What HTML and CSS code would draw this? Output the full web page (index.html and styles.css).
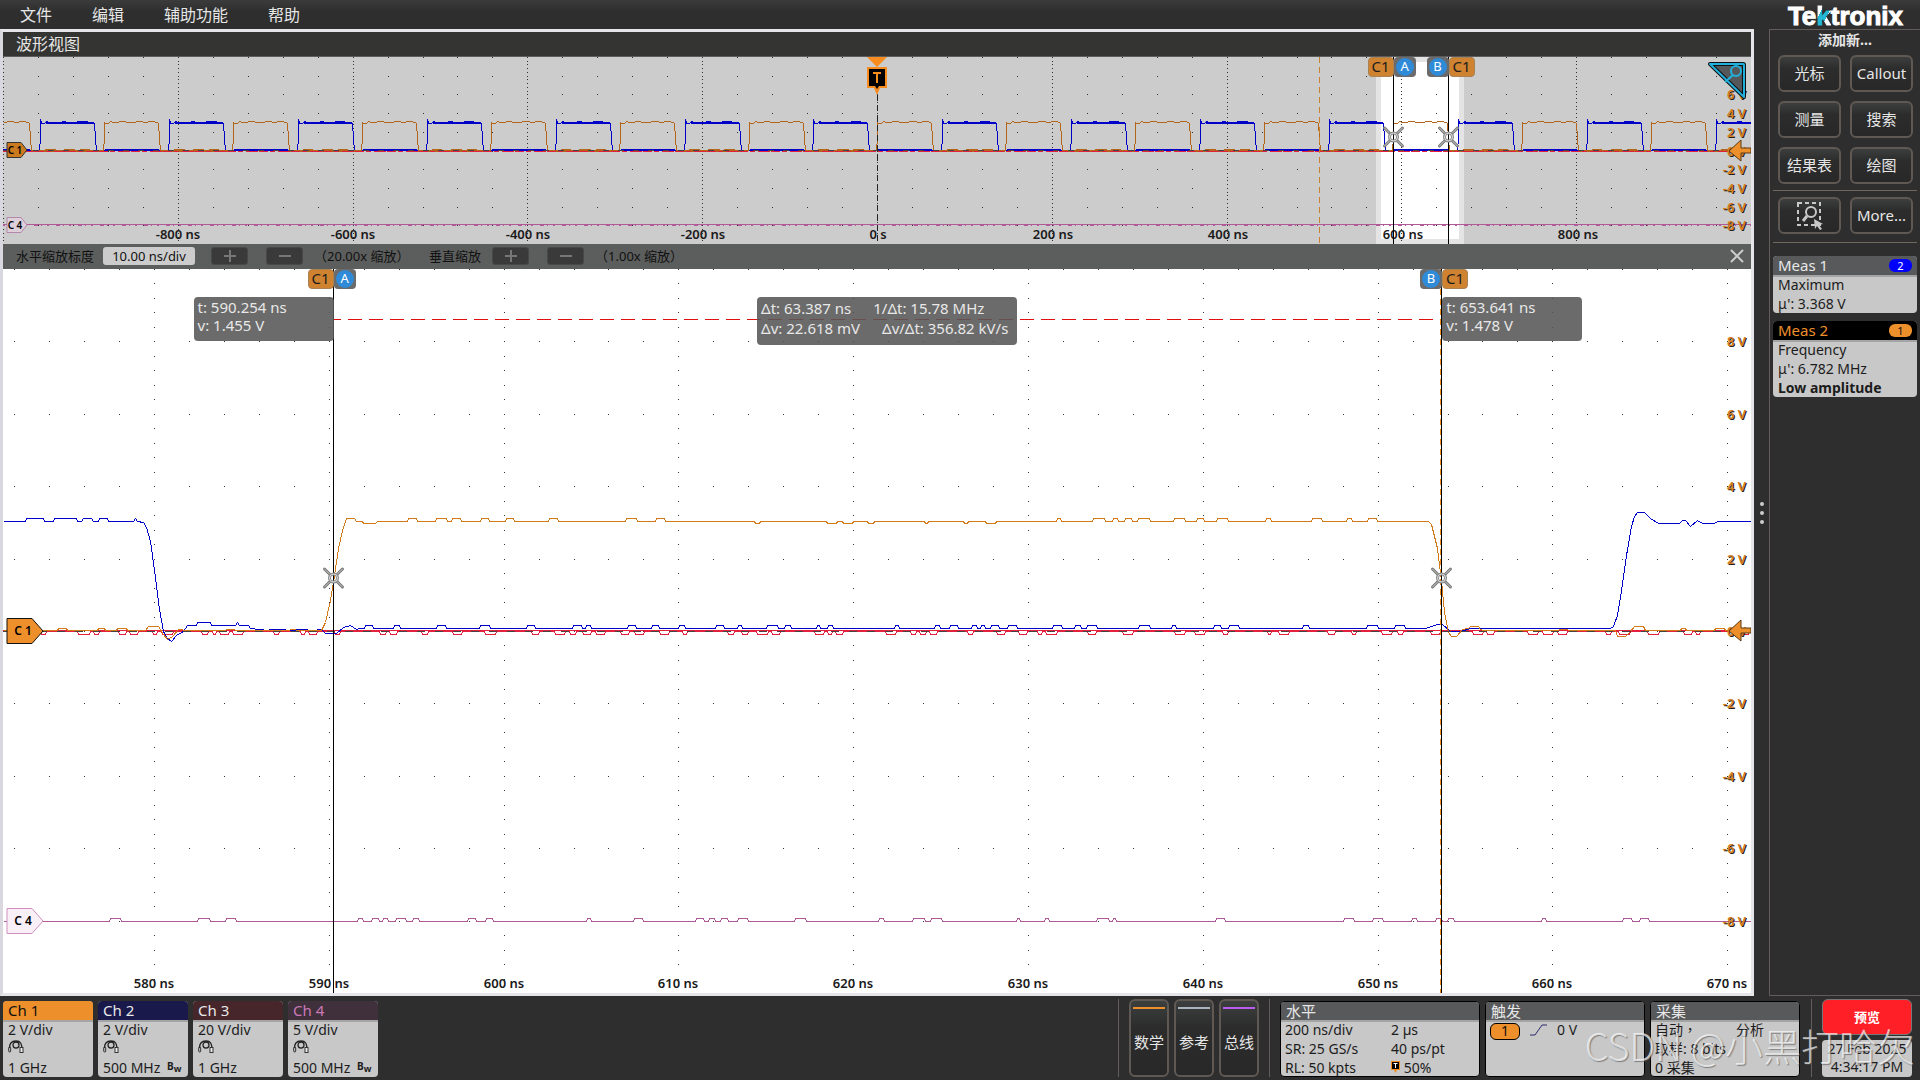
FILE: index.html
```html
<!DOCTYPE html>
<html lang="zh-CN">
<head>
<meta charset="utf-8">
<meta name="viewport" content="width=device-width, initial-scale=1">
<title>Tektronix</title>
<link rel="stylesheet" href="styles.css">
</head>
<body>
<svg class="defs" aria-hidden="true">
  <defs>
    <symbol id="probe" viewBox="0 0 16 13">
      <path d="M1.500 8C1.500 4 3 1 8 1s5.500 3 6 7" fill="none" stroke="#222" stroke-width="1.300"/>
      <circle cx="8" cy="5" r="3" fill="none" stroke="#222" stroke-width="1.300"/>
      <rect x=".7" y="7" width="2" height="5" rx="1" fill="none" stroke="#333"/>
      <rect x="12" y="7.500" width="3" height="5" fill="#eee" stroke="#333"/>
    </symbol>
  </defs>
</svg>

<header class="menubar">
  <nav class="menu">
    <button type="button">文件</button>
    <button type="button">编辑</button>
    <button type="button">辅助功能</button>
    <button type="button">帮助</button>
  </nav>
  <div class="logo">Te<span class="logo-k">k</span>tronix</div>
</header>

<main class="workspace">
  <section class="view">
    <h1 class="view-title">波形视图</h1>
    <div class="plot overview"><svg id="overview"></svg>
      <span class="tag-pair at-a narrow"><b class="src">C1</b><b class="cur"><i>A</i></b></span>
      <span class="tag-pair at-b narrow"><b class="cur"><i>B</i></b><b class="src">C1</b></span>
    </div>
    <div class="zoombar">
      <label for="hscale">水平缩放标度</label>
      <input id="hscale" type="text" value="10.00 ns/div">
      <button type="button" class="step" aria-label="水平放大"><svg viewBox="0 0 14 14"><path d="M7 1v12M1 7h12"/></svg></button>
      <button type="button" class="step" aria-label="水平缩小"><svg viewBox="0 0 14 14"><path d="M1 7h12"/></svg></button>
      <span class="factor">（20.00x 缩放）</span>
      <span class="vlabel">垂直缩放</span>
      <button type="button" class="step" aria-label="垂直放大"><svg viewBox="0 0 14 14"><path d="M7 1v12M1 7h12"/></svg></button>
      <button type="button" class="step" aria-label="垂直缩小"><svg viewBox="0 0 14 14"><path d="M1 7h12"/></svg></button>
      <span class="factor">（1.00x 缩放）</span>
      <button type="button" class="close" aria-label="关闭"><svg viewBox="0 0 14 14"><path d="M1 1l12 12M13 1L1 13"/></svg></button>
    </div>
    <div class="plot zoomed"><svg id="zoomed"></svg>
      <span class="tag-pair at-a"><b class="src">C1</b><b class="cur"><i>A</i></b></span>
      <span class="tag-pair at-b"><b class="cur"><i>B</i></b><b class="src">C1</b></span>
      <div class="readout readout-a">t: 590.254 ns<br>v: 1.455 V</div>
      <div class="readout readout-delta">
        <div><span>Δt: 63.387 ns</span><span>1/Δt: 15.78 MHz</span></div>
        <div><span>Δv: 22.618 mV</span><span>Δv/Δt: 356.82 kV/s</span></div>
      </div>
      <div class="readout readout-b">t: 653.641 ns<br>v: 1.478 V</div>
    </div>
  </section>

  <div class="handle"><i></i><i></i><i></i></div>

  <aside class="panel">
    <h2>添加新...</h2>
    <div class="tools">
      <button type="button">光标</button><button type="button">Callout</button>
      <button type="button">测量</button><button type="button">搜索</button>
      <button type="button">结果表</button><button type="button">绘图</button>
    </div>
    <div class="tools ruled">
      <button type="button" aria-label="缩放选择">
        <svg width="28" height="30" viewBox="0 0 28 30">
          <path d="M2 2h22v22H2z" fill="none" stroke="#c8c8c8" stroke-width="2" stroke-dasharray="4 3"/>
          <circle cx="15" cy="11" r="5" fill="#2c2c2c" stroke="#c8c8c8" stroke-width="2"/>
          <path d="M11 15l-4 5" stroke="#c8c8c8" stroke-width="3"/>
          <path d="M18 18l9 5-4 1 3 4-2 1-3-4-2 3z" fill="#c8c8c8"/>
        </svg>
      </button>
      <button type="button">More...</button>
    </div>
    <article class="badge meas">
      <h3>Meas 1 <span class="pill blue">2</span></h3>
      <p>Maximum</p><p>μ': 3.368 V</p>
    </article>
    <article class="badge meas selected">
      <h3>Meas 2 <span class="pill">1</span></h3>
      <p>Frequency</p><p>μ': 6.782 MHz</p><p><strong>Low amplitude</strong></p>
    </article>
  </aside>
</main>

<footer class="settings">
  <article class="badge channel ch1"><h3>Ch 1</h3><p>2 V/div</p><p><svg class="probe"><use href="#probe"/></svg></p><p>1 GHz</p></article>
  <article class="badge channel ch2"><h3>Ch 2</h3><p>2 V/div</p><p><svg class="probe"><use href="#probe"/></svg></p><p>500 MHz <b class="bw">B<sub>w</sub></b></p></article>
  <article class="badge channel ch3"><h3>Ch 3</h3><p>20 V/div</p><p><svg class="probe"><use href="#probe"/></svg></p><p>1 GHz</p></article>
  <article class="badge channel ch4"><h3>Ch 4</h3><p>5 V/div</p><p><svg class="probe"><use href="#probe"/></svg></p><p>500 MHz <b class="bw">B<sub>w</sub></b></p></article>

  <div class="adders">
    <button type="button" class="math">数学</button>
    <button type="button" class="ref">参考</button>
    <button type="button" class="bus">总线</button>
  </div>
  <article class="badge info horizontal"><h3>水平</h3>
    <div class="pairs">
      <p>200 ns/div</p><p>2 µs</p>
      <p>SR: 25 GS/s</p><p>40 ps/pt</p>
      <p>RL: 50 kpts</p>
      <p><svg width="9" height="12" viewBox="0 0 9 12"><path d="M0 0h9v9H6L4.500 12 3 9H0z" fill="#f28c1e"/><path d="M1 1h7v7H1z" fill="#000"/><path d="M2.500 2.500h4M4.500 2v5" stroke="#fff" fill="none"/></svg> 50%</p>
    </div>
  </article>
  <article class="badge info trigger"><h3>触发</h3>
    <p><span class="pill source">1</span><svg width="17" height="12" viewBox="0 0 17 12"><path d="M0 11h5L12 1h5" fill="none" stroke="#2b2b6b"/></svg><span>0 V</span></p>
  </article>
  <article class="badge info acquire"><h3>采集</h3>
    <div class="pairs"><p>自动<span class="comma" lang="zh-TW">，</span></p><p>分析</p></div>
    <p>取样: 8 bits</p><p>0 采集</p>
  </article>
  <div class="status">
    <button type="button" class="preview">预览</button>
    <time datetime="2025-02-27T16:34:17">27 Feb 2025<br>4:34:17 PM</time>
  </div>
  <div class="watermark">CSDN @小黑打哈欠</div>
</footer>
<script src="plot.js"></script>
</body>
</html>
```
FILE: styles.css
```css
* { box-sizing: border-box; }
body {
  margin: 0;
  min-height: 100vh;
  display: flex;
  flex-direction: column;
  background: #2e2e2e;
  color: #e6e6e6;
  font: 14px/19px "Noto Sans", "Noto Sans CJK SC", sans-serif;
}
h1, h2, h3, p { margin: 0; font-weight: 400; }
button { font: inherit; color: inherit; border: 0; padding: 0; background: none; }
.defs { position: absolute; width: 0; height: 0; }

/* menu bar */
.menubar {
  height: 29px;
  display: flex;
  align-items: center;
  justify-content: space-between;
  padding: 0 17px 0 20px;
  background: linear-gradient(#3b3b3b, #2e2e2e 40%);
}
.menu { display: flex; gap: 40px; font-size: 16px; line-height: 30px; }
.logo { font: 700 26px/29px "Liberation Sans", sans-serif; color: #fff; padding-top: 3px; -webkit-text-stroke: 1px #fff; }
.logo-k { -webkit-text-stroke: 1px transparent; background: linear-gradient(117deg, #fff 34%, #22b8d6 34%, #22b8d6 62%, #fff 62%); background-clip: text; -webkit-background-clip: text; color: transparent; }

/* waveform view */
.workspace { flex: 1; display: flex; min-height: 0; }
.view {
  flex: 1;
  min-width: 0;
  display: flex;
  flex-direction: column;
  border: 3px solid #e6e6ea;
  border-left-color: #d8d8de;
}
.view-title {
  height: 25px;
  padding-left: 13px;
  font-size: 16px;
  line-height: 24px;
  background: #343432;
  border-bottom: 1px solid #5c5c5c;
}
.plot { position: relative; display: flex; overflow: hidden; }
.plot > svg { flex: 1; min-width: 0; display: block; }
.overview { height: 187px; background: #ccc; }
.zoomed { flex: 1; min-height: 500px; background: #fff; }
.plot text { font: 600 13px "Noto Sans", sans-serif; }
.axis-x { fill: #1a1a1a; text-anchor: middle; }
.axis-y { fill: #d57d1c; text-anchor: end; text-shadow: 1px 1px 0 #222; }
.plot .tag-large { font-size: 12px; text-anchor: middle; }
.plot .tag-small { font-size: 10px; text-anchor: middle; }

.tag-pair { position: absolute; top: 0; display: flex; height: 20px; color: #1c1c1c; font-size: 15px; }
.tag-pair b, .tag-pair i { font-weight: 400; font-style: normal; }
.tag-pair .src { width: 26px; text-align: center; background: #cf8230; border: 1px solid #a98354; border-radius: 4px; line-height: 16px; }
.tag-pair .cur { width: 22px; padding: 1px 2px; background: #6b6b6b; border-radius: 4px; }
.tag-pair .cur i { display: block; width: 18px; height: 18px; border-radius: 9px; background: #2f8bd8; color: #fff; font-size: 13px; line-height: 17px; text-align: center; }
.at-a { left: calc(18.91% - 26px); }
.at-b { left: calc(82.32% - 22px); }
.at-a.narrow { left: calc(79.55% - 26px); }
.at-b.narrow { left: calc(82.7% - 22px); }

.readout {
  position: absolute;
  top: 28px;
  padding: 1px 4px 5px;
  border-radius: 4px;
  background: rgba(86, 86, 86, .88);
  color: #e8e8e8;
  font-size: 15px;
  line-height: 18px;
  white-space: nowrap;
}
.readout-a, .readout-b { width: 140px; height: 44px; }
.readout-a { left: calc(18.91% - 140px); }
.readout-b { left: 82.34%; }
.readout-delta { left: 43.14%; width: 260px; height: 48px; line-height: 20px; }
.readout-delta div { display: flex; gap: 22px; }

/* zoom bar */
.zoombar {
  height: 25px;
  display: flex;
  align-items: center;
  padding: 0 3px 1px 13px;
  background: #5c5e5d;
  color: #111;
  font-size: 13px;
  line-height: 18px;
}
.zoombar input {
  width: 92px;
  height: 18px;
  margin: 0 16px 0 9px;
  padding: 0;
  border: 0;
  border-radius: 3px;
  background: #ccc;
  text-align: center;
  font: inherit;
  color: #111;
}
.step {
  width: 37px;
  height: 18px;
  margin-right: 18px;
  display: grid;
  place-items: center;
  border-radius: 3px;
  background: #3a3a3a;
  border: 1px solid #484848;
}
.step svg { width: 14px; height: 14px; stroke: #777; stroke-width: 2; }
.factor { width: 115px; margin-left: -7px; }
.vlabel { margin-right: 11px; }
.close { margin-left: auto; display: grid; padding: 4px; }
.close svg { width: 14px; height: 14px; stroke: #ccc; stroke-width: 2; }

.handle { width: 15px; display: flex; flex-direction: column; align-items: center; justify-content: center; gap: 5px; }
.handle i { width: 4px; height: 4px; border-radius: 2px; background: #ccc; }

/* side panel */
.panel {
  width: 151px;
  padding: 0 3px;
  border: 1px solid #625c5b;
  border-right: 0;
}
.panel h2 { font-size: 14px; font-weight: 700; line-height: 20px; text-align: center; }
.tools {
  display: grid;
  grid-template-columns: 63px 63px;
  gap: 9px;
  padding: 5px 5px 6px;
  font-size: 15px;
}
.tools button, .adders button {
  border: 2px solid #5f5853;
  border-radius: 6px;
  background: linear-gradient(#3d3f3f, #2c2c2c 35%, #282828);
}
.tools button { height: 37px; display: grid; place-items: center; }
.ruled { border: solid #70675f; border-width: 1px 0; padding: 6px 5px 8px; margin-bottom: 13px; }

/* badges */
.badge { border-radius: 4px; overflow: hidden; background: #c8c8c8; color: #1c1c1c; }
.badge h3 { height: 21px; margin-bottom: -2px; font-size: 15px; line-height: 18px; border-bottom: 2px solid #a4a4a4; background: #58595b; color: #e8e8e8; }
.badge h3, .badge p { padding: 0 5px; }
.badge p { height: 19px; line-height: 19px; white-space: nowrap; }
.meas { margin-bottom: 8px; }
.meas h3 { display: flex; justify-content: space-between; }
.badge.selected h3 { background: #000; color: #f0902a; }
.pill { width: 23px; height: 13px; margin-top: 3px; border-radius: 6px; background: #ed8f2a; color: #111; text-align: center; font-size: 11px; line-height: 13px; }
.pill.blue { background: #00f; color: #fff; }

/* footer */
.settings { position: relative; display: flex; padding: 3px 8px 3px 3px; gap: 5px; height: 84px; }
.settings .badge { margin-top: 2px; height: 76px; }
.channel { width: 90px; }
.badge.ch1 h3 { background: #ed8f2a; color: #111; }
.badge.ch2 h3 { background: #19194b; }
.badge.ch3 h3 { background: #46262b; }
.badge.ch4 h3 { background: #40303c; color: #cc79b5; }
.probe { width: 16px; height: 13px; display: block; }
.channel p:nth-of-type(2) { padding-top: 1px; }
.bw { font-size: 10px; margin-left: 3px; vertical-align: 3px; line-height: 10px; }
.bw sub { font-size: 9px; vertical-align: -2px; }
.adders { display: flex; gap: 5px; margin-left: auto; padding: 0 10px; border: solid #625c5b; border-width: 0 1px; margin-right: 5px; }
.adders button { width: 40px; height: 78px; padding-top: 8px; font-size: 15px; position: relative; }
.adders button::before { content: ""; position: absolute; left: 2px; right: 2px; top: 6px; height: 2px; background: #ed8f2a; }
.adders .ref::before { background: #a9b2bd; }
.adders .bus::before { background: #b95cf0; }
.info { border: 1px solid #000; }
.badge.info h3 { height: 20px; }
.info p { padding: 0 4px; }
.horizontal { width: 200px; }
.trigger { width: 160px; }
.acquire { width: 150px; }
.pairs { display: grid; grid-template-columns: 106px 1fr; }
.acquire .pairs { grid-template-columns: 81px 1fr; }
.comma { font-family: "Noto Sans CJK TC", sans-serif; }
.badge.trigger p { display: flex; align-items: center; gap: 10px; padding-left: 4px; }
.pill.source { width: 30px; height: 17px; border: 1px solid #000; font-size: 14px; line-height: 14px; }
.status { width: 101px; margin-left: 6px; padding-left: 10px; border-left: 1px solid #625c5b; display: flex; flex-direction: column; gap: 5px; }
.preview { height: 36px; border: 1px solid #777; border-radius: 6px; background: #ff1f27; color: #fff; font-size: 13px; font-weight: 700; }
.status time { height: 37px; border-radius: 4px; background: #c8c8c8; color: #1c1c1c; text-align: center; line-height: 18px; }
.watermark {
  position: absolute;
  right: 5px;
  bottom: 13px;
  font: 300 38px/44px "Noto Sans CJK SC", sans-serif;
  color: rgba(255, 255, 255, .7);
  text-shadow: 1px 1px 1px rgba(80, 80, 80, .6);
  white-space: nowrap;
  pointer-events: none;
}
```
FILE: plot.js
```js
// Trace data is kept in display units: 1748 wide, 724 (zoomed) or 187 (overview) high.
const SPAN = 1748;
const ORANGE = '#d57a18', BROWN = '#b3661a', BLUE = '#0000c8', RED = '#e3203e', PINK = '#b05a98';

function random(seed) {
  let s = seed * 7919;
  const next = () => (s = (s * 16807) % 2147483647) / 2147483647;
  next(); next();
  return next;
}

// Flat level from x0 to x1 with short steps of the given size.
function level(x0, x1, y, step, gap, seed) {
  const r = random(seed), pts = [[x0, y]];
  let x = x0;
  for (;;) {
    const q = r();
    x += 4 + q * q * gap * 2;
    const w = 3 + r() * 9;
    if (x + w + 2 > x1) break;
    pts.push([x, y], [x + 1, y + step], [x + w, y + step], [x + w + 1, y]);
    x += w;
  }
  pts.push([x1, y]);
  return pts;
}

const n = Math.round;
const path = (pts, sx, sy) => 'M' + pts.map(p => (n(p[0] * sx) + .5) + ' ' + (n(p[1] * sy) + .5)).join('L');
const line = (d, color, extra = '') => `<path d="${d}" fill="none" stroke="${color}" shape-rendering="crispEdges" ${extra}/>`;

// Dots on each row every fifth of a division, and on each column every fifth of a row.
function grid(W, H, origin, step, sx) {
  let d = '';
  const first = origin - step;
  for (let i = 0; first + i * step / 5 <= SPAN; i++) {
    const x = first + i * step / 5;
    if (x < 0) continue;
    const count = i % 5 === 0 ? 50 : 10;
    for (let r = 0; r < count; r++) d += `M${n(x * sx)} ${n(r * H / count)}h1v1h-1z`;
  }
  return `<path d="${d}" fill="#333"/>`;
}

function marker(x, y) {
  const arms = 'M-9-9L-4-4M9-9L4-4M-9 9L-4 4M9 9L4 4';
  return `<g transform="translate(${x} ${n(y)})" fill="none"><path d="${arms}" stroke="#777" stroke-width="3" stroke-linecap="round"/><path d="${arms}" stroke="#ccc" stroke-linecap="round"/><circle r="4" stroke="#888" stroke-width="3"/><circle r="4" stroke="#ddd"/></g>`;
}

function arrow(W, y) {
  return `<path d="M${W - 22} ${n(y)}l12-11v8h10v5h-10v8z" fill="#ed8f2a" stroke="#5a3a12"/>`;
}

function tag(y, w, h, name, fill, edge) {
  const t = h / 2, tip = h > 20 ? 11 : 6;
  return `<path d="M4 ${n(y) - t}h${w - tip}l${tip} ${t}l-${tip} ${t}h${tip - w}z" fill="${fill}" stroke="${edge}" stroke-linejoin="round"/>` +
    `<text class="${h > 20 ? 'tag-large' : 'tag-small'}" x="${n(w / 2) + 2}" y="${n(y) + 4}">${name}</text>`;
}

function volts(W, H, list) {
  return list.map(v => `<text class="axis-y" x="${W - 5}" y="${n(H / 2 - v * H / 20) + 5}">${v} V</text>`).join('');
}

function drawZoomed() {
  const svg = document.getElementById('zoomed');
  const W = svg.clientWidth, H = svg.clientHeight, sx = W / SPAN, sy = H / 724;
  const blue = [[0, 252], [22, 252], [23, 249], [40, 249], [41, 252], [50, 252], [51, 249], [73, 249], [74, 252], [78, 252], [80, 249], [88, 249], [90, 252], [95, 252], [96, 249], [104, 249], [105, 252], [130, 252], [132, 249], [134, 252], [140, 253], [143, 258], [147, 272], [152, 308], [156, 340], [160, 362], [164, 369], [168, 372], [173, 366], [180, 362], [184, 356], [193, 356], [194, 353], [207, 353], [208, 356], [232, 356], [234, 353], [236, 356], [245, 356], [247, 359],
    ...level(255, 318, 360, 1, 8, 5), [322, 364], [333, 364], [340, 358], [347, 356], [353, 360],
    ...level(356, 1422, 359, -3, 32, 91), [1434, 355], [1439, 355], [1447, 362], [1457, 362], [1467, 359], [1607, 359], [1610, 357], [1614, 346], [1618, 321], [1623, 286], [1628, 257], [1631, 247], [1634, 243], [1641, 243], [1647, 249], [1655, 254], [1676, 254], [1679, 251], [1682, 251], [1687, 257], [1694, 251], [1699, 254], [1711, 254], [1714, 252], [1748, 252]];
  const orange = [...level(0, 138, 361, -2, 20, 7), [142, 361], [145, 357], [155, 357], [160, 365], [164, 370], [169, 367], [175, 360],
    ...level(183, 316, 361, -1, 40, 12), [318, 361], [322, 353], [327, 331], [331, 306], [335, 279], [339, 261], [343, 249], [351, 249], [353, 252], [359, 252], [360, 254], [372, 254], [374, 252],
    ...level(400, 700, 252, -3, 34, 33), ...level(725, 1010, 252, 2, 36, 4), ...level(1018, 1415, 252, -3, 30, 81),
    [1425, 252], [1428, 255], [1434, 279], [1438, 311], [1441, 343], [1445, 363], [1448, 367], [1453, 367], [1459, 360], [1465, 359], [1467, 357], [1475, 357], [1477, 360],
    ...level(1480, 1612, 361, -1, 40, 14), [1614, 367], [1622, 367], [1627, 362], [1631, 357], [1640, 357], [1642, 361], ...level(1650, 1730, 361, -2, 14, 3)];
  const zero = H / 2, a = n(.1888 * W) + .5, b = n(.8233 * W) - .5;
  let s = grid(W, H, 151, 174.8, sx);
  s += line(path(level(0, SPAN, 652, -3, 70, 17), sx, sy), PINK);
  s += line(path(level(0, SPAN, 362, 3, 20, 29), sx, sy), RED);
  s += line(`M0 ${n(zero) - .5}H${W}`, RED);
  s += line(path(blue, sx, sy), BLUE) + line(path(orange, sx, sy), ORANGE);
  s += line(`M0 ${n(zero) + .5}H${W}`, '#444', 'stroke-dasharray="8 10"');
  for (let i = 0; i < 10; i++)
    s += `<text class="axis-x" x="${i === 9 ? W - 24 : n((151 + i * 174.8) * sx)}" y="${H - 5}">${580 + i * 10} ns</text>`;
  s += line(`M${a} 50.500H${b}`, '#e01010', 'stroke-dasharray="14 7" stroke-dashoffset="7"');
  s += line(`M${b - 1} 0V${H}`, '#ef8a1f', 'stroke-dasharray="6 4"');
  s += line(`M${a} 0V${H}M${b} 0V${H}`, '#000');
  s += volts(W, H, [8, 6, 4, 2, 0, -2, -4, -6, -8]);
  s += marker(a, 309 * sy) + marker(b, 309 * sy) + arrow(W, zero);
  s += tag(zero, 36, 25, 'C 1', '#ed8f2a', '#111') + tag(652 * sy, 36, 25, 'C 4', '#f8f0f6', '#d08fc0');
  svg.setAttribute('viewBox', `0 0 ${W} ${H}`);
  svg.innerHTML = s;
}

function drawOverview() {
  const svg = document.getElementById('overview');
  const W = svg.clientWidth, H = svg.clientHeight, sx = W / SPAN, sy = H / 187;
  const period = 128.9, blueStart = 37, orangeStart = 101 - period;
  const wave = (first, seed, peak) => {
    const pts = [[0, first < 0 ? 65 : 93]];
    for (let x = first; x < SPAN; x += period) {
      pts.push([x - 1, 93], [x, 80], [x, peak], [x + 1, 66], [x + 4, 66], [x + 6, 64], [x + 9, 65], ...level(x + 10, x + 53, 65, -1, 4, seed), [x + 54, 66], [x + 55, 80], [x + 56, 94], [x + 58, 94],
        ...level(x + 59, x + period - 3, 93, -1, 4, seed + 9));
    }
    return pts.filter(p => p[0] >= 0);
  };
  // Thick stretches of a level, from one offset to another in every period.
  const band = (first, from, to, y, color) => {
    let d = '';
    for (let x = first; x < SPAN; x += period)
      d += `M${n(Math.max(0, x + from) * sx)} ${n(y * sy)}H${n(Math.min(SPAN, x + to) * sx)}`;
    return line(d, color, 'stroke-width="2"');
  };
  let s = `<rect x="${n(1373 * sx)}" width="${n(88 * sx)}" height="${H}" fill="#e4e4e4"/><rect x="${n(1378 * sx)}" y="5" width="${n(78 * sx)}" height="${H - 10}" fill="#fff"/>`;
  s += grid(W, H, 0, 174.8, sx);
  s += line(path(wave(blueStart, 3, 62), sx, sy), BLUE) + line(path(wave(orangeStart, 8, 65), sx, sy), BROWN);
  s += band(blueStart, 6, 54, 66, BLUE);
  s += band(orangeStart, 1, 55, 93, BLUE);
  s += band(orangeStart, 56, period - 1, 94, BROWN);
  s += line(`M0 ${n(95 * sy) - .5}H${W}`, RED, 'stroke-dasharray="9 2 5 3 12 1"');
  s += line(`M0 ${n(94 * sy) - .5}H${W}`, '#444', 'stroke-dasharray="6 9"');
  s += line(`M0 ${n(167 * sy) + .5}H${W}`, PINK) + line(`M0 ${n(168 * sy) + .5}H${W}`, PINK, 'stroke-dasharray="2 7 4 3 1 5"');
  const z = n(874 * sx) + .5, a = n(.7952 * W) + .5, b = n(.8267 * W) + .5;
  s += line(`M${z} 38V${H}`, '#222', 'stroke-dasharray="6 4"');
  s += line(`M${n(1316 * sx) + .5} 0V${H}`, '#c9812f', 'stroke-dasharray="6 4"');
  for (let i = 1; i < 10; i++) {
    const t = -1000 + i * 200;
    s += `<text class="axis-x" x="${n(i * 175 * sx)}" y="${H - 5}">${t} ${t ? 'ns' : 's'}</text>`;
  }
  s += line(`M${a} 0V${H}M${b} 0V${H}`, '#000');
  s += volts(W, H, [6, 4, 2, 0, -2, -4, -6, -8]);
  s += marker(a, 80 * sy) + marker(b, 80 * sy) + arrow(W, 93.5 * sy);
  s += `<g transform="translate(${n(874 * sx)} 0)"><path d="M-10 0h20l-10 10zM-10 10h20v21h-7l-3 7-3-7h-7z" fill="#f88c1e"/><path d="M-8 12h16v17h-6l-2 3-2-3h-6z" fill="#000"/><path d="M-4 16h8M0 15v11" stroke="#f88c1e" stroke-width="2"/></g>`;
  s += `<g transform="translate(${W - 42} 6)" fill="none"><path d="M1 1h33q1 0 1 1v32z" fill="#55585a" stroke="#111" stroke-width="4" stroke-linejoin="round"/><path d="M1 1h33q1 0 1 1v32z" stroke="#22b0dc" stroke-width="2" stroke-linejoin="round"/><circle cx="27" cy="8" r="5" stroke="#22b0dc" stroke-width="2"/><path d="M24 12l-8 7" stroke="#22b0dc" stroke-width="2"/></g>`;
  s += tag(93 * sy, 20, 15, 'C 1', '#cc7a20', '#333') + tag(168 * sy, 20, 15, 'C 4', '#ddd0da', '#b587aa');
  svg.setAttribute('viewBox', `0 0 ${W} ${H}`);
  svg.innerHTML = s;
}

function draw() { drawOverview(); drawZoomed(); }
draw();
window.addEventListener('resize', draw);
```
